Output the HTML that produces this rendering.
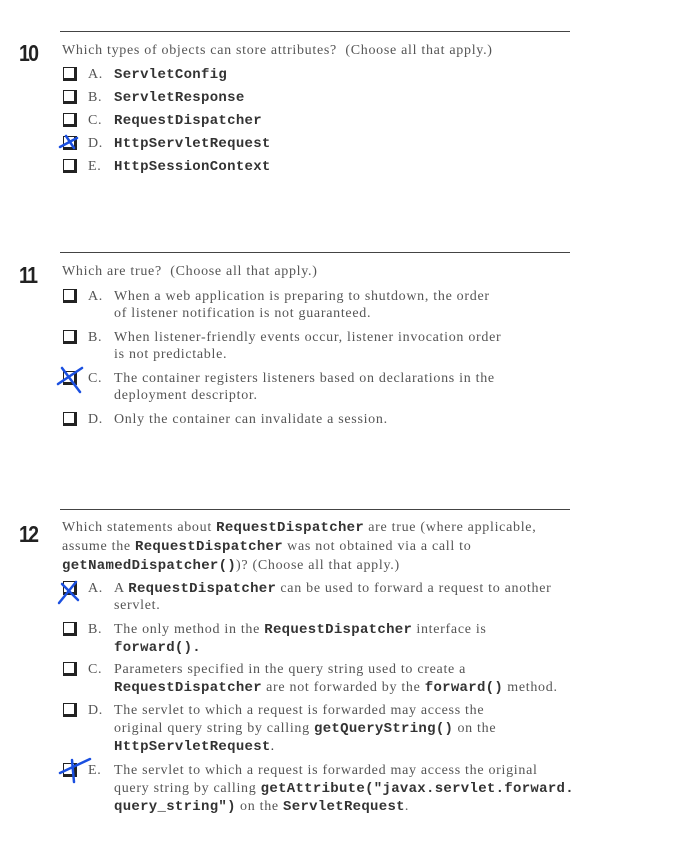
<!DOCTYPE html>
<html><head><meta charset="utf-8"><style>
html,body{margin:0;padding:0;background:#fff;width:686px;height:846px;overflow:hidden}
body{position:relative;font-family:"Liberation Serif",serif;color:#555;font-size:14px;letter-spacing:0.7px}
.l{position:absolute;white-space:nowrap;line-height:18px}
.rule{position:absolute;left:60px;width:510px;height:1px;background:#444}
.n{position:absolute;left:19px;font-family:"Liberation Sans",sans-serif;font-weight:bold;font-size:23px;color:#222;letter-spacing:-2px;transform:scaleX(0.85);transform-origin:left}
.cb{position:absolute;left:63px;width:10px;height:10px;border:1px solid #222;border-right-width:3px;border-bottom-width:3px;background:#fff}
.m{font-family:"Liberation Mono",monospace;font-weight:bold;color:#333;font-size:14px;letter-spacing:0.3px}
svg{position:absolute;left:0;top:0}
</style></head><body>
<div class="rule" style="top:31px"></div>
<div class="n" style="top:40px">10</div>
<div class="l" style="left:62px;top:42px">Which types of objects can store attributes? &nbsp;(Choose all that apply.)</div>
<div class="cb" style="top:67px"></div><div class="l" style="left:88px;top:66px">A.</div><div class="l m" style="left:114px;top:66px">ServletConfig</div>
<div class="cb" style="top:90px"></div><div class="l" style="left:88px;top:89px">B.</div><div class="l m" style="left:114px;top:89px">ServletResponse</div>
<div class="cb" style="top:113px"></div><div class="l" style="left:88px;top:112px">C.</div><div class="l m" style="left:114px;top:112px">RequestDispatcher</div>
<div class="cb" style="top:136px"></div><div class="l" style="left:88px;top:135px">D.</div><div class="l m" style="left:114px;top:135px">HttpServletRequest</div>
<div class="cb" style="top:159px"></div><div class="l" style="left:88px;top:158px">E.</div><div class="l m" style="left:114px;top:158px">HttpSessionContext</div>

<div class="rule" style="top:252px"></div>
<div class="n" style="top:262px">11</div>
<div class="l" style="left:62px;top:263px">Which are true? &nbsp;(Choose all that apply.)</div>
<div class="cb" style="top:289px"></div><div class="l" style="left:88px;top:288px">A.</div><div class="l" style="left:114px;top:288px">When a web application is preparing to shutdown, the order</div><div class="l" style="left:114px;top:305px">of listener notification is not guaranteed.</div>
<div class="cb" style="top:330px"></div><div class="l" style="left:88px;top:329px">B.</div><div class="l" style="left:114px;top:329px">When listener-friendly events occur, listener invocation order</div><div class="l" style="left:114px;top:346px">is not predictable.</div>
<div class="cb" style="top:371px"></div><div class="l" style="left:88px;top:370px">C.</div><div class="l" style="left:114px;top:370px">The container registers listeners based on declarations in the</div><div class="l" style="left:114px;top:387px">deployment descriptor.</div>
<div class="cb" style="top:412px"></div><div class="l" style="left:88px;top:411px">D.</div><div class="l" style="left:114px;top:411px">Only the container can invalidate a session.</div>

<div class="rule" style="top:509px"></div>
<div class="n" style="top:521px">12</div>
<div class="l" style="left:62px;top:519px">Which statements about <span class="m">RequestDispatcher</span> are true (where applicable,</div>
<div class="l" style="left:62px;top:538px">assume the <span class="m">RequestDispatcher</span> was not obtained via a call to</div>
<div class="l" style="left:62px;top:557px"><span class="m">getNamedDispatcher()</span>)? (Choose all that apply.)</div>
<div class="cb" style="top:581px"></div><div class="l" style="left:88px;top:580px">A.</div><div class="l" style="left:114px;top:580px">A <span class="m">RequestDispatcher</span> can be used to forward a request to another</div><div class="l" style="left:114px;top:597px">servlet.</div>
<div class="cb" style="top:622px"></div><div class="l" style="left:88px;top:621px">B.</div><div class="l" style="left:114px;top:621px">The only method in the <span class="m">RequestDispatcher</span> interface is</div><div class="l m" style="left:114px;top:639px">forward().</div>
<div class="cb" style="top:662px"></div><div class="l" style="left:88px;top:661px">C.</div><div class="l" style="left:114px;top:661px">Parameters specified in the query string used to create a</div><div class="l" style="left:114px;top:679px"><span class="m">RequestDispatcher</span> are not forwarded by the <span class="m">forward()</span> method.</div>
<div class="cb" style="top:703px"></div><div class="l" style="left:88px;top:702px">D.</div><div class="l" style="left:114px;top:702px">The servlet to which a request is forwarded may access the</div><div class="l" style="left:114px;top:720px">original query string by calling <span class="m">getQueryString()</span> on the</div><div class="l m" style="left:114px;top:738px">HttpServletRequest<span style="font-family:'Liberation Serif',serif;font-weight:normal">.</span></div>
<div class="cb" style="top:763px"></div><div class="l" style="left:88px;top:762px">E.</div><div class="l" style="left:114px;top:762px">The servlet to which a request is forwarded may access the original</div><div class="l" style="left:114px;top:780px">query string by calling <span class="m">getAttribute("javax.servlet.forward.</span></div><div class="l" style="left:114px;top:798px"><span class="m">query_string")</span> on the <span class="m">ServletRequest</span>.</div>

<svg width="686" height="846" fill="none" stroke="#1a4fe0" stroke-width="2.5" stroke-linecap="round">
<path d="M60 147 L77 138 M66 136 L74 148"/>
<path d="M58 384 L82 368 M62 368 L80 392"/>
<path d="M59 603 L76 582 M62 584 L78 600"/>
<path d="M60 773 L90 759 M72 760 L74 782"/>
</svg>
</body></html>
